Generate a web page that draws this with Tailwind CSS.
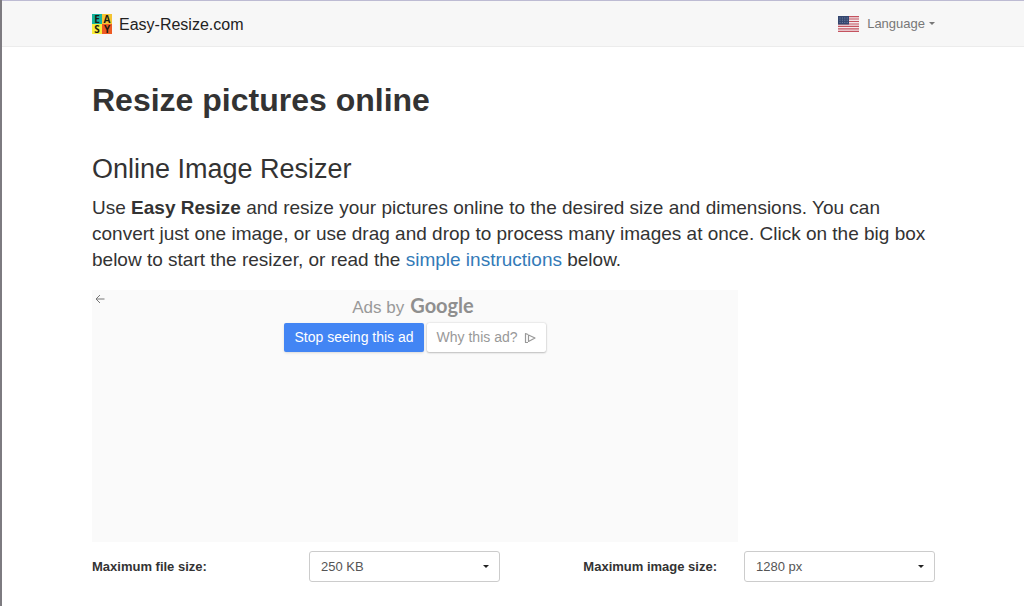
<!DOCTYPE html>
<html lang="en">
<head>
<meta charset="utf-8">
<meta name="viewport" content="width=device-width, initial-scale=1">
<title>Easy-Resize.com</title>
<script src="https://cdn.jsdelivr.net/npm/@tailwindcss/browser@4"></script>
</head>
<body class="min-h-screen border-l-2 border-[#7d7b80] bg-white font-['Liberation_Sans',Arial,sans-serif] text-[#333]">
<header class="border-t-1 border-b border-t-[#bdbbd3] border-b-[#ececec] bg-[#f7f7f7]">
  <nav class="flex h-[45px] items-center justify-between pr-[89px] pl-[90px]">
    <a href="#" class="flex items-center gap-[7px] text-base text-[#222]">
      <svg class="h-5 w-5 overflow-visible" viewBox="0 0 20 20" aria-hidden="true" font-family="Open Sans, sans-serif" font-weight="700" font-size="10" text-anchor="middle" fill="#1c1c10">
        <rect width="10" height="10" fill="#16b3a0"/><rect x="10" width="10" height="10" fill="#f4c433"/>
        <rect y="10" width="10" height="10" fill="#f8ee3c"/><rect x="10" y="10" width="10" height="10" fill="#ee5a24"/>
        <text x="5" y="9">E</text><text x="15" y="9">A</text><text x="5" y="19">S</text><text x="15" y="19">Y</text>
      </svg>
      <span class="pt-0.5">Easy-Resize.com</span>
    </a>
    <button type="button" class="flex items-center text-[13px] text-[#777]">
      <svg class="mr-2 h-4 w-[21px]" viewBox="0 0 21 16" aria-hidden="true">
        <rect width="21" height="16" fill="#f3e9ec"/>
        <path d="M0 .6h21M0 3h21M0 5.500h21M0 8h21M0 10.400h21M0 12.900h21M0 15.400h21" stroke="#c4535f" stroke-width="1.200"/>
        <rect width="11" height="8.500" fill="#34466f"/>
        <path d="M1.500 2h9M1.500 4.200h9M1.500 6.400h9" stroke="#8d9ab8" stroke-width=".8" stroke-dasharray="1 1.400"/>
      </svg>
      <span>Language</span>
      <svg class="ml-1 h-[3px] w-1.5" viewBox="0 0 6 3" fill="#777" aria-hidden="true"><path d="M0 0h6L3 3z"/></svg>
    </button>
  </nav>
</header>
<main class="pt-8 pr-[89px] pl-[90px]">
  <h1 class="text-[32px] leading-[42px] font-bold">Resize pictures online</h1>
  <h2 class="mt-8 text-[27px] leading-8">Online Image Resizer</h2>
  <p class="mt-2.5 text-[19px] leading-[26px]">Use <strong>Easy Resize</strong> and resize your pictures online to the desired size and dimensions. You can convert just one image, or use drag and drop to process many images at once. Click on the big box below to start the resizer, or read the <a href="#" class="text-[#337ab7]">simple instructions</a> below.</p>
  <section aria-label="Advertisement" class="relative mt-[17px] h-[252px] max-w-[646px] bg-[#fafafa] pt-[3px] text-[#999]">
    <button type="button" aria-label="Back" class="absolute top-1 left-[3px]">
      <svg class="h-2.5 w-2.5" viewBox="0 0 10 10" fill="none" stroke="#777"><path d="M9.500 5H1M5 1 1 5l4 4"/></svg>
    </button>
    <div class="flex items-baseline justify-center gap-1.5 pr-1 text-[17px] leading-6">
      <span>Ads by</span><span class="font-['Lato',sans-serif] text-[20px] leading-6 font-bold text-[#8f8f8f]">Google</span>
    </div>
    <div class="mt-[3px] flex justify-center gap-[3px] text-[14px]">
      <button type="button" class="h-[29px] rounded-xs bg-[#4285f4] px-2.5 text-white shadow-sm">Stop seeing this ad</button>
      <button type="button" class="flex h-[29px] items-center gap-1.5 rounded-xs bg-white px-2.5 shadow-[0_0_2px_rgba(0,0,0,0.2),0_1px_2px_rgba(0,0,0,0.2)]">Why this ad?
        <svg class="h-3 w-3" viewBox="0 0 12 12" fill="none" stroke="#999" stroke-width="1.200" stroke-linejoin="round" aria-hidden="true"><path d="M4 10.500H1.500V1.500L4 2.500M4.500 3v6.500L11 6z"/></svg>
      </button>
    </div>
  </section>
  <form class="mt-[9px] flex items-center justify-between text-[13px]">
    <div class="flex items-center justify-between basis-[408px]">
      <label for="file-size" class="font-bold">Maximum file size:</label>
      <div class="relative w-[191px]">
        <select id="file-size" class="h-[31px] w-full appearance-none rounded-[3px] border border-[#ccc] bg-white px-[11px] text-[#555]"><option>250 KB</option><option>500 KB</option></select>
        <svg class="pointer-events-none absolute top-[14px] right-[11px] h-[3px] w-1.5" viewBox="0 0 6 3" fill="#222" aria-hidden="true"><path d="M0 0h6L3 3z"/></svg>
      </div>
    </div>
    <div class="flex items-center gap-[27px]">
      <label for="image-size" class="font-bold">Maximum image size:</label>
      <div class="relative w-[191px]">
        <select id="image-size" class="h-[31px] w-full appearance-none rounded-[3px] border border-[#ccc] bg-white px-[11px] text-[#555]"><option>1280 px</option><option>1920 px</option></select>
        <svg class="pointer-events-none absolute top-[14px] right-[11px] h-[3px] w-1.5" viewBox="0 0 6 3" fill="#222" aria-hidden="true"><path d="M0 0h6L3 3z"/></svg>
      </div>
    </div>
  </form>
</main>
</body>
</html>
